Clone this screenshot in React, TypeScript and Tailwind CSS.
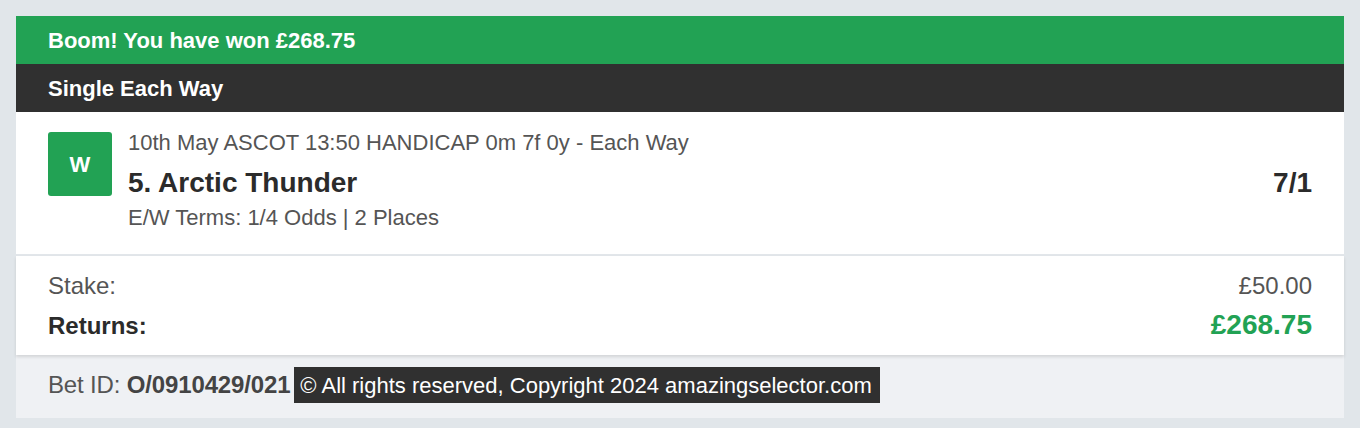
export default function App() {
  return (
    <div
      className="min-h-[428px] bg-[#e1e6ea] px-4 pt-4 pb-[10px]"
      style={{ fontFamily: '"Liberation Sans", Arial, sans-serif' }}
    >
      <div className="bg-white">
        {/* Win banner */}
        <div className="flex h-12 items-center bg-[#22a254] px-8 text-[22px] font-bold text-white">
          Boom! You have won £268.75
        </div>

        {/* Bet type */}
        <div className="flex h-12 items-center bg-[#303030] px-8 text-[22px] font-bold text-white">
          Single Each Way
        </div>

        {/* Selection */}
        <div className="flex h-[144px] items-start gap-4 border-b-2 border-[#e2e6ea] px-8 pt-[18px]">
          <div className="mt-[2px] flex size-16 shrink-0 items-center justify-center rounded-[3px] bg-[#22a254] text-[22px] font-bold text-white">
            W
          </div>
          <div className="flex flex-1 flex-col">
            <div className="text-[22px] leading-[26px] text-[#555]">
              10th May ASCOT 13:50 HANDICAP 0m 7f 0y - Each Way
            </div>
            <div className="mt-[11px] flex items-center justify-between">
              <span className="text-[28px] font-bold leading-[32px] text-[#2b2b2b]">5. Arctic Thunder</span>
              <span className="text-[28px] font-bold leading-[32px] text-[#2b2b2b]">7/1</span>
            </div>
            <div className="mt-[6px] text-[22px] leading-[26px] text-[#555]">
              E/W Terms: 1/4 Odds | 2 Places
            </div>
          </div>
        </div>

        {/* Stake and returns */}
        <div className="relative flex h-[99px] flex-col gap-[9px] px-8 pt-4 shadow-[0_2px_3px_rgba(0,0,0,0.12)]">
          <div className="flex items-center justify-between text-[24px] leading-[28px] text-[#555]">
            <span>Stake:</span>
            <span>£50.00</span>
          </div>
          <div className="flex items-baseline justify-between leading-[32px]">
            <span className="text-[24px] font-bold text-[#2b2b2b]">Returns:</span>
            <span className="text-[28px] font-bold text-[#22a254]">£268.75</span>
          </div>
        </div>

        {/* Footer */}
        <div className="flex h-[63px] items-center bg-[#eff1f4] px-8 text-[#555]">
          <span className="-mt-[3px] text-[24px] tracking-[-0.15px]">
            Bet ID: <b className="text-[#444]">O/0910429/021</b>
          </span>
          <span className="ml-1 -mt-[3px] flex h-9 items-center bg-[#303030] pl-[6px] pr-2 text-[22px] text-white">
            © All rights reserved, Copyright 2024 amazingselector.com
          </span>
        </div>
      </div>
    </div>
  );
}
